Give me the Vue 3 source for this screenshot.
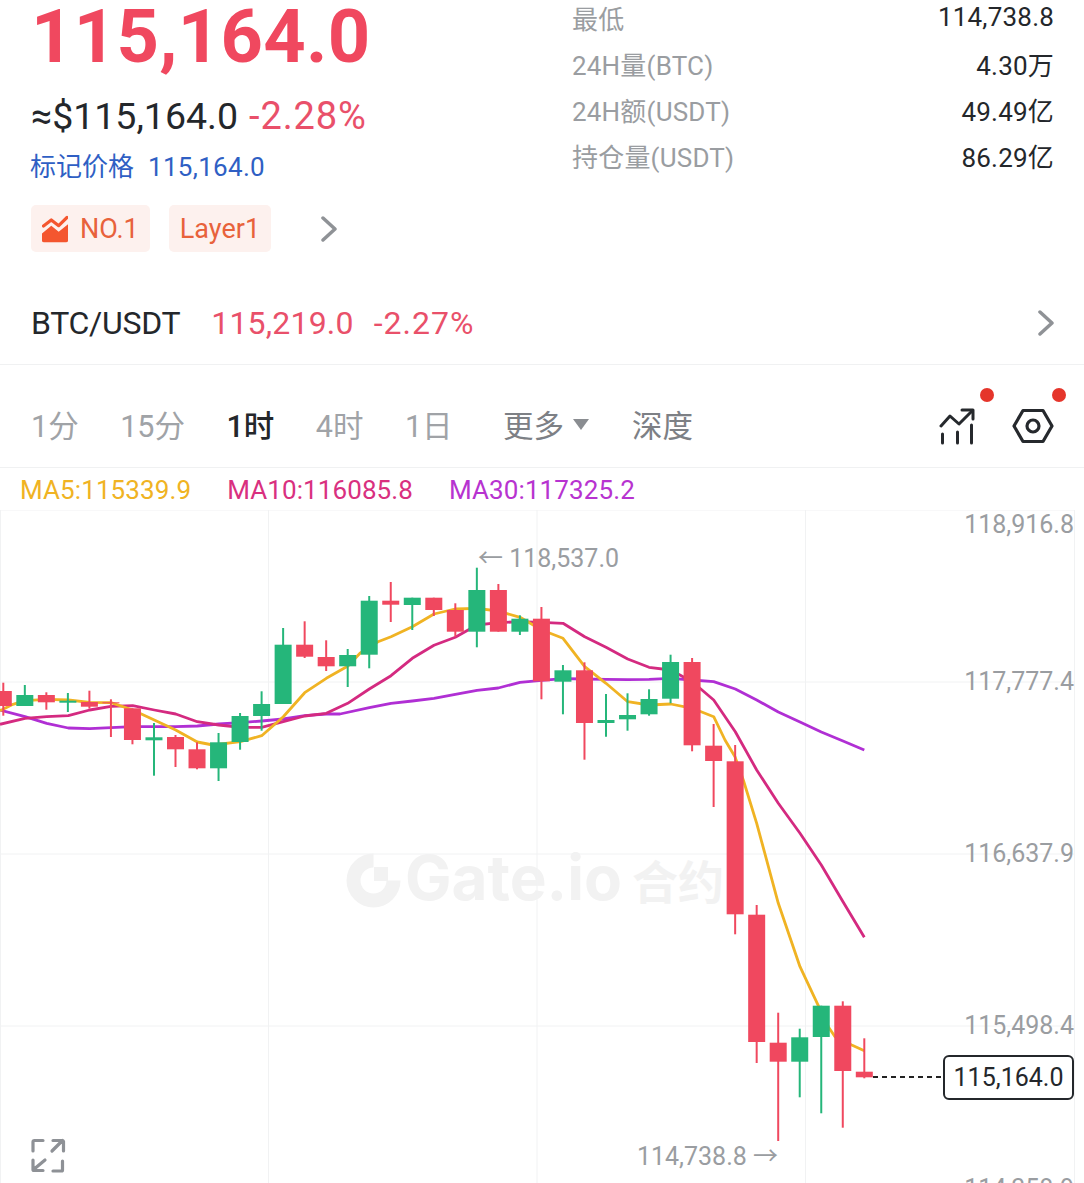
<template>
  <div class="page">
    <header class="head">
      <div class="head-left">
        <div class="price">115,164.0</div>
        <div class="sub-price">
          <span>≈$115,164.0</span>
          <span class="down">-2.28%</span>
        </div>
        <div class="mark"><span>标记价格</span><span class="mark-val">115,164.0</span></div>
        <div class="tags">
          <span class="tag">
            <svg width="26" height="28" viewBox="0 0 26 28">
              <path d="M1.500 11 9.300 5l7.400 5.700L25 2.500" fill="none" stroke="#f4562f" stroke-width="3.200" stroke-linecap="round" stroke-linejoin="round" />
              <path d="M0 18.500 9.300 10.700l7.400 6L26 9.300V25a2 2 0 0 1-2 2.300H2A2 2 0 0 1 0 25z" fill="#f4562f" />
            </svg>
            NO.1
          </span>
          <span class="tag">Layer1</span>
          <svg class="chev tag-chev" width="16" height="26" viewBox="0 0 16 26">
            <path d="M2 2 14 13 2 24" />
          </svg>
        </div>
      </div>
      <dl class="stats">
        <div v-for="s in stats" :key="s.label" class="stat">
          <dt>{{ s.label }}</dt>
          <dd>{{ s.value }}</dd>
        </div>
      </dl>
    </header>

    <div class="pair">
      <span class="pair-name">BTC/USDT</span>
      <span class="pair-price">115,219.0</span>
      <span class="pair-pct">-2.27%</span>
      <svg class="chev pair-chev" width="16" height="26" viewBox="0 0 16 26">
        <path d="M2 2 14 13 2 24" />
      </svg>
    </div>

    <nav class="tabs">
      <span v-for="t in tabs" :key="t.label" class="tab" :class="t.cls">{{ t.label }}</span>
      <span class="tab more">更多<i class="caret"></i></span>
      <span class="tab more depth">深度</span>
      <div class="tools">
        <span class="tool">
          <svg width="36" height="38" viewBox="0 0 36 38" fill="none" stroke="#26292d" stroke-width="3" stroke-linecap="round" stroke-linejoin="round">
            <path d="M2 19 11 9l9 8 13-13" />
            <path d="M23 3h11v9" />
            <path d="M3.500 27v9M18.500 25v11M32.500 18v18" />
          </svg>
          <b class="dot"></b>
        </span>
        <span class="tool">
          <svg width="42" height="36" viewBox="0 0 42 36" fill="none" stroke="#26292d">
            <path d="M2 18 11 2.500h20L40 18l-9 15.500H11z" stroke-width="3.200" stroke-linejoin="round" />
            <circle cx="21" cy="18" r="6" stroke-width="3.200" />
          </svg>
          <b class="dot"></b>
        </span>
      </div>
    </nav>

    <div class="ma-row">
      <span class="ma5">MA5:115339.9</span>
      <span class="ma10">MA10:116085.8</span>
      <span class="ma30">MA30:117325.2</span>
    </div>

    <svg class="chart" width="1084" height="673" viewBox="0 510 1084 673">
      <!-- watermark -->
      <g fill="#f2f2f2">
        <path d="M373.500 853.500a27 27 0 1 0 27 27h-14a13 13 0 1 1-13-13z" />
        <rect x="374" y="867" width="14" height="14" />
        <text x="405" y="900" class="wm-latin">Gate.io</text>
        <text x="632" y="899" class="wm-cjk">合约</text>
      </g>

      <g stroke="#f1f2f3" stroke-width="1">
        <line v-for="y in gridY" :key="y" x1="0" x2="1075" :y1="y" :y2="y" />
        <line v-for="x in gridX" :key="x" :x1="x" :x2="x" y1="510" y2="1183" />
      </g>

      <polyline :points="toPoints(ma30)" class="ma" stroke="#b02fd4" />
      <polyline :points="toPoints(ma10)" class="ma" stroke="#d42a80" />
      <polyline :points="toPoints(ma5)" class="ma" stroke="#f0b323" />

      <g v-for="(c, i) in candles" :key="i" :fill="c[4] ? green : red" :stroke="c[4] ? green : red">
        <line :x1="candleX(i)" :x2="candleX(i)" :y1="c[2]" :y2="c[3]" stroke-width="2" />
        <rect :x="candleX(i) - 8.500" :y="c[0]" width="17" :height="c[1] - c[0]" stroke="none" />
      </g>

      <line x1="873" x2="943" y1="1077" y2="1077" stroke="#222" stroke-width="2" stroke-dasharray="5 4" />

      <text v-for="a in axis" :key="a.label" x="1074" :y="a.y" text-anchor="end" class="axis">{{ a.label }}</text>
      <text x="478" y="567" class="axis">← 118,537.0</text>
      <text x="778" y="1165" text-anchor="end" class="axis">114,738.8 →</text>

      <path d="M33 1151v-9a1.500 1.500 0 0 1 1.500-1.500H43M52 1151l10.500-10.500M53 1140.500h9.500a1.500 1.500 0 0 1 1 1V1151M45 1160l-12 10M33 1160v9.500a1 1 0 0 0 1 1H43M62.500 1161v9a1 1 0 0 1-1 1H53"
        fill="none" stroke="#8e9196" stroke-width="3.200" stroke-linecap="round" stroke-linejoin="round" />
    </svg>

    <div class="last-price">115,164.0</div>
  </div>
</template>

<script setup>
const green = "#25b67a";
const red = "#f0485f";

const stats = [
  { label: "最低", value: "114,738.8" },
  { label: "24H量(BTC)", value: "4.30万" },
  { label: "24H额(USDT)", value: "49.49亿" },
  { label: "持仓量(USDT)", value: "86.29亿" },
];

const tabs = [
  { label: "1分" },
  { label: "15分" },
  { label: "1时", cls: "active" },
  { label: "4时" },
  { label: "1日" },
];

const gridY = [510, 682, 854, 1026];
const gridX = [0.5, 268.5, 537, 805.5, 1074.5];

const axis = [
  { label: "118,916.8", y: 533 },
  { label: "117,777.4", y: 690 },
  { label: "116,637.9", y: 862 },
  { label: "115,498.4", y: 1034 },
  { label: "114,358.9", y: 1197 },
];

// body top, body bottom, wick top, wick bottom, rising
const candles = [
  [691, 706, 682.7, 715.7, 0],
  [695, 706, 685, 706, 1],
  [695, 702.3, 692.3, 709.7, 0],
  [700.7, 702.7, 693, 712, 1],
  [702, 706.7, 690.7, 708.7, 0],
  [702.3, 703.3, 699.3, 737, 0],
  [708.3, 740, 708.3, 744.3, 0],
  [737.3, 740.3, 723, 775.7, 1],
  [737, 749.3, 735, 767, 0],
  [749.3, 768.3, 742.3, 769.3, 0],
  [742.3, 768.3, 733, 781, 1],
  [716, 742, 713, 749.7, 1],
  [704, 716, 691.3, 730.7, 1],
  [644.7, 704, 628, 704, 1],
  [644.7, 656.7, 621.3, 658, 0],
  [657, 666.3, 640.3, 671, 0],
  [655, 666.3, 649, 687, 1],
  [600.7, 654.7, 596, 668.3, 1],
  [600.7, 604.7, 582, 622, 0],
  [597.7, 605, 597.7, 630, 1],
  [597.7, 610, 597.7, 616, 0],
  [610, 631.7, 603.3, 636.7, 0],
  [590, 631.7, 567.7, 647.3, 1],
  [590, 631.7, 584, 631.7, 0],
  [618.7, 631.7, 615.3, 635, 1],
  [618.7, 681.3, 607, 699.3, 0],
  [670.3, 681.7, 665, 714.3, 1],
  [670.3, 723, 662.3, 759.7, 0],
  [720, 723, 694, 736.7, 1],
  [715, 719.3, 693.3, 730.7, 1],
  [699, 714.3, 689.3, 715.7, 1],
  [662, 698.7, 654.7, 703.3, 1],
  [662, 745.3, 658, 751.3, 0],
  [745.7, 761, 724, 807, 0],
  [761.3, 914.3, 745, 934.3, 0],
  [914.7, 1042, 905, 1063, 0],
  [1042.7, 1061.7, 1012.7, 1141, 0],
  [1037.3, 1061.7, 1028.7, 1097.3, 1],
  [1005.7, 1037, 1005.7, 1113.3, 1],
  [1005.7, 1071, 1001.3, 1127.7, 0],
  [1071.7, 1077.3, 1038.3, 1078.3, 0],
];

const ma5 = [
  [0, 710.7], [13, 704.3], [25, 700.7], [46.7, 699.3], [68.3, 700], [89.7, 702.3], [111, 702.7],
  [132.7, 710], [154.3, 720], [175.7, 730], [197.3, 742], [213, 745], [240.3, 741.7], [261.7, 735.7],
  [283.3, 716.7], [304.7, 692.7], [326.3, 678.3], [348, 666], [360, 653.3], [378, 641.7], [391, 636.7],
  [412.3, 626.7], [434, 614], [455, 609], [477, 608.3], [498, 611], [520, 617.3], [541.7, 630],
  [563, 638.3], [584.7, 666.7], [606, 683.3], [627.7, 701.7], [649, 705], [670.7, 704], [692.3, 708.3],
  [713.7, 716.7], [725, 740], [735, 756.7], [743.3, 780], [756.7, 823.3], [778.3, 903.3], [800, 966.7],
  [818.3, 1005.7], [828.3, 1026.7], [835, 1036.7], [851.7, 1045], [864.3, 1050.7],
];

const ma10 = [
  [0, 724.3], [25, 718.3], [46.7, 716.7], [68.3, 715.7], [89.7, 710], [111, 706.3], [132.7, 705.7],
  [154.3, 710], [175.7, 714], [197.3, 721.7], [218.7, 725], [240.3, 727.3], [261.7, 727.3], [283.3, 721.7],
  [304.7, 716], [326.3, 713.3], [347.7, 703.3], [369.3, 689], [391, 675.7], [412.3, 658.3], [434, 645.3],
  [455.3, 637.3], [477, 625], [498.3, 622.7], [520, 621.7], [541.7, 622.3], [563, 623.3], [584.7, 636.7],
  [606, 647.3], [627.7, 659], [649, 667.3], [670.7, 670], [692.3, 681.7], [713.7, 700], [735.3, 731.7],
  [756.7, 770], [778.3, 803.3], [800, 833.3], [821.3, 865], [843, 901.7], [864.3, 937.3],
];

const ma30 = [
  [0, 710], [25, 716.7], [46.7, 723.3], [68.3, 728], [89.7, 728.7], [111, 727.7], [132.7, 726.7],
  [154.3, 726.7], [175.7, 726.7], [197.3, 726], [218.7, 724], [240.3, 722.7], [261.7, 721], [283.3, 719],
  [304.7, 715.7], [326.3, 714], [340, 714], [369.3, 707.7], [391, 703.3], [412.3, 701], [434, 698.3],
  [455.3, 694.3], [477, 690.3], [498.3, 688], [520, 682.3], [541.7, 680.3], [563, 678.7], [584.7, 679],
  [606, 679.3], [627.7, 679.7], [649, 679.3], [670.7, 678.3], [692.3, 680], [713.7, 681.7], [735.3, 689],
  [756.7, 700], [778.3, 712], [800, 722], [821.3, 732], [843, 741], [864.3, 750],
];

function candleX(i) {
  return 3.3 + i * 21.525;
}

function toPoints(list) {
  return list.map((p) => p.join(",")).join(" ");
}
</script>

<style scoped>
.page {
  position: relative;
  width: 1084px;
  height: 1183px;
  overflow: hidden;
  background: #fff;
  color: #24272b;
  font-family: Roboto, "Noto Sans CJK SC", sans-serif;
}
.head {
  display: flex;
  justify-content: space-between;
  height: 274px;
  padding: 0 30px 0 31px;
  box-sizing: border-box;
}
.price {
  height: 74px;
  font-size: 74px;
  line-height: 74px;
  letter-spacing: 0.3px;
  font-weight: 700;
  color: #f0485f;
}
.sub-price {
  display: flex;
  gap: 11px;
  margin-top: 18px;
  font-size: 37.500px;
  line-height: 48px;
}
.down {
  color: #e9506a;
  font-size: 38px;
  letter-spacing: 0.9px;
}
.mark {
  display: flex;
  gap: 14px;
  margin-top: 9px;
  margin-left: -1px;
  font-size: 26px;
  line-height: 36px;
  color: #2f5fc4;
}
.mark-val {
  letter-spacing: 0.3px;
}
.tags {
  display: flex;
  align-items: center;
  gap: 19px;
  margin-top: 20px;
}
.tag {
  display: flex;
  align-items: center;
  gap: 12px;
  height: 47px;
  padding: 0 11px;
  border-radius: 5px;
  background: #fdf1ee;
  color: #e8623b;
  font-size: 27px;
}
.chev {
  fill: none;
  stroke: #8f9296;
  stroke-width: 3.500;
  stroke-linecap: round;
  stroke-linejoin: round;
}
.tag-chev {
  margin-left: 31px;
}
.stats {
  width: 482px;
  margin: 0;
}
.stat {
  display: flex;
  justify-content: space-between;
  height: 46px;
  align-items: center;
  font-size: 26px;
  letter-spacing: 0.2px;
  color: #24272b;
}
.stat:first-child {
  margin-top: -6px;
}
.stat dt {
  color: #9a9da1;
}
.stat dd {
  margin: 0;
}
.pair {
  display: flex;
  align-items: center;
  height: 91px;
  padding: 7px 30px 0 31px;
  box-sizing: border-box;
  font-size: 32px;
  border-bottom: 1px solid #f0f1f2;
}
.pair-name {
  letter-spacing: -0.3px;
}
.pair-price {
  margin-left: 31px;
  color: #e9506a;
  letter-spacing: 0.2px;
}
.pair-pct {
  margin-left: 20px;
  color: #e9506a;
  letter-spacing: 1px;
}
.pair-chev {
  margin-left: auto;
}
.tabs {
  display: flex;
  align-items: center;
  height: 103px;
  padding: 16px 0 0 31px;
  box-sizing: border-box;
  border-bottom: 1px solid #f0f1f2;
  font-size: 30.500px;
}
.tab {
  margin-right: 41.500px;
  color: #a0a3a7;
}
.tab.active {
  color: #24272b;
  font-weight: 500;
}
.more {
  display: flex;
  align-items: center;
  margin-left: 9px;
  margin-right: 43px;
  color: #7d8085;
}
.depth {
  margin-left: 0;
}
.caret {
  width: 0;
  height: 0;
  margin-left: 9px;
  border-left: 8px solid transparent;
  border-right: 8px solid transparent;
  border-top: 11px solid #8a8d91;
}
.tools {
  display: flex;
  align-items: center;
  gap: 37px;
  margin: 4px 30px 0 auto;
}
.tool {
  position: relative;
  display: flex;
}
.dot {
  position: absolute;
  right: -19px;
  top: -19px;
  width: 14px;
  height: 14px;
  border-radius: 50%;
  background: #e5352b;
}
.tool + .tool .dot {
  right: -12px;
  top: -20px;
}
.ma-row {
  display: flex;
  align-items: center;
  gap: 36px;
  height: 42px;
  padding: 2px 0 0 20px;
  box-sizing: border-box;
  font-size: 26px;
  letter-spacing: 0.1px;
}
.ma5 {
  color: #f0b323;
}
.ma10 {
  color: #d9307f;
}
.ma30 {
  color: #b733d0;
}
.chart {
  display: block;
}
.ma {
  fill: none;
  stroke-width: 2.800;
  stroke-linejoin: round;
}
.axis {
  font-size: 25px;
  fill: #9a9da1;
}
.wm-latin {
  font-family: Inter, sans-serif;
  font-size: 62px;
  font-weight: 700;
}
.wm-cjk {
  font-size: 46px;
  font-weight: 700;
}
.last-price {
  position: absolute;
  left: 943px;
  top: 1055px;
  width: 131px;
  height: 45px;
  box-sizing: border-box;
  border: 2px solid #24272b;
  border-radius: 6px;
  background: #fff;
  font-size: 25px;
  line-height: 41px;
  text-align: center;
}
</style>
